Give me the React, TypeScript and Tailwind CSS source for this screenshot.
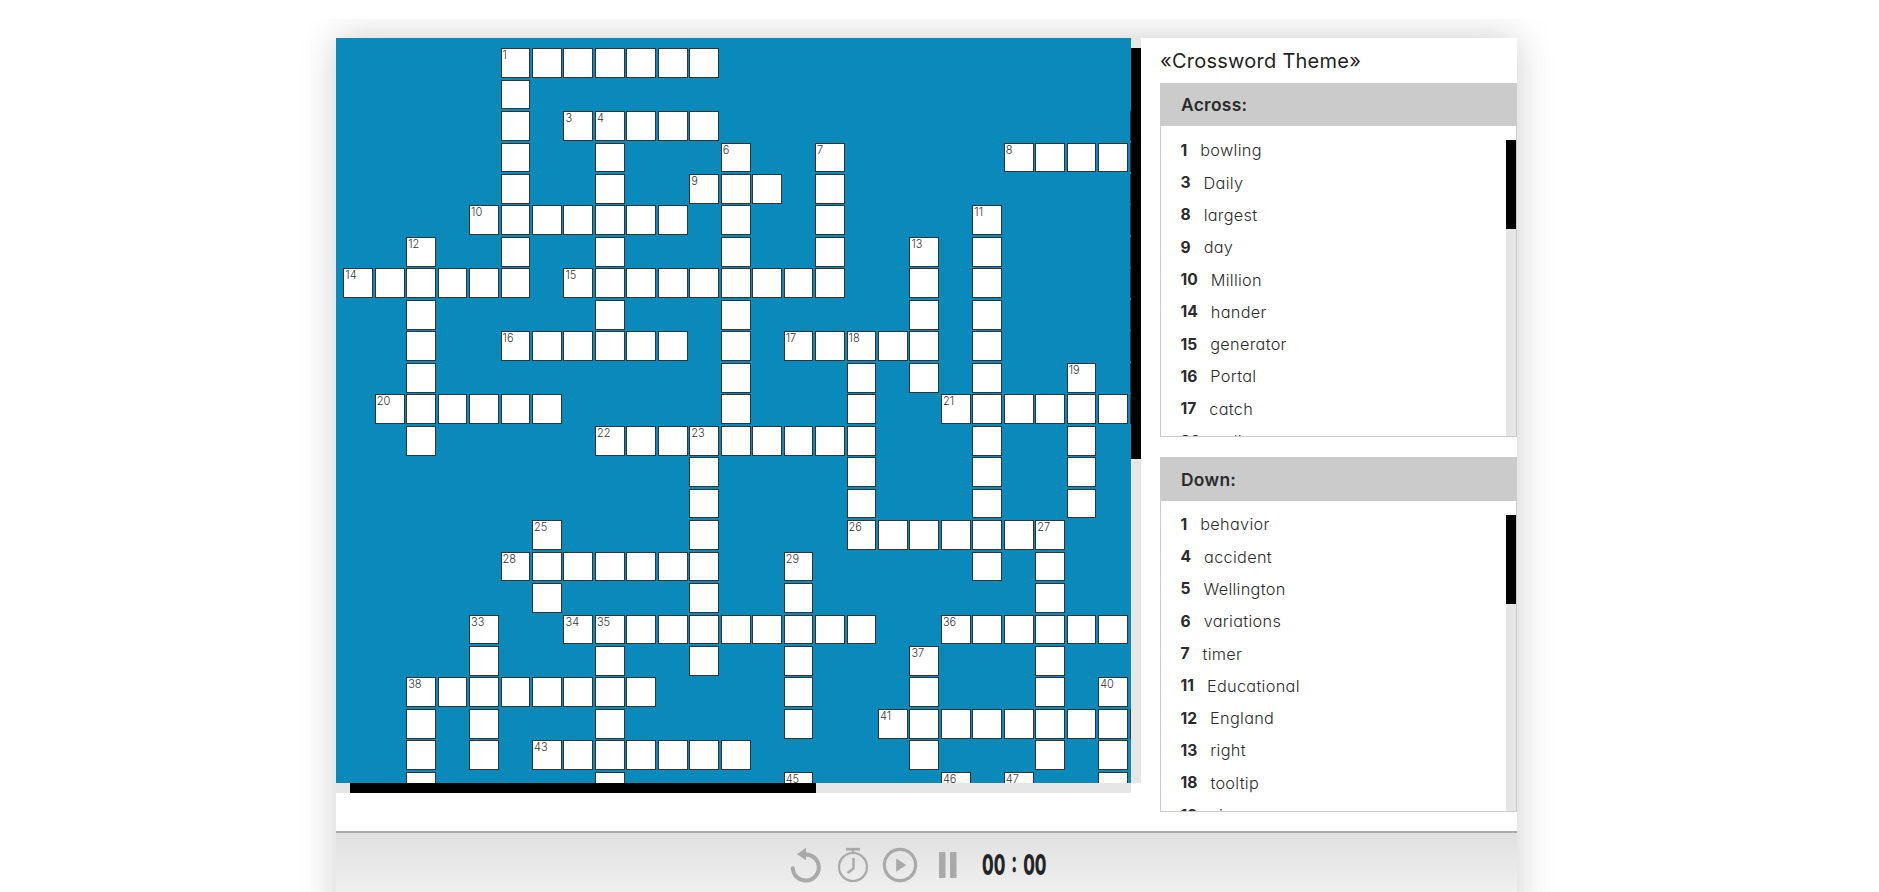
const BOARD: string[] = [
  '.....#######..............',
  '.....#....................',
  '.....#.#####.............#',
  '.....#..#...#..#.....#####',
  '.....#..#..###.#.........#',
  '....#######.#..#....#....#',
  '..#..#..#...#..#..#.#....#',
  '######.#########..#.#....#',
  '..#.....#...#.....#.#....#',
  '..#..######.#.#####.#....#',
  '..#.........#...#.#.#..#.#',
  '.######.....#...#..#######',
  '..#.....#########...#..#..',
  '...........#....#...#..#..',
  '...........#....#...#..#..',
  '......#....#....#######...',
  '.....#######..#.....#.#...',
  '......#....#..#.......#...',
  '....#..##########..######.',
  '....#...#..#..#...#...#...',
  '..########....#...#...#.#.',
  '..#.#...#.....#..#########',
  '..#.#.#######.....#...#.#.',
  '..#.....#.....#....#.#..#.',
];

const NUMBERS: Record<string, number> = {
  '0-5': 1, '2-7': 3, '2-8': 4, '3-12': 6, '3-15': 7, '3-21': 8, '4-11': 9, '5-4': 10, '5-20': 11,
  '6-2': 12, '6-18': 13, '7-0': 14, '7-7': 15, '9-5': 16, '9-14': 17, '9-16': 18, '10-23': 19,
  '11-1': 20, '11-19': 21, '12-8': 22, '12-11': 23, '15-6': 25, '15-16': 26, '15-22': 27,
  '16-5': 28, '16-14': 29, '18-4': 33, '18-7': 34, '18-8': 35, '18-19': 36, '19-18': 37,
  '20-2': 38, '20-24': 40, '21-17': 41, '22-6': 43, '23-14': 45, '23-19': 46, '23-21': 47,
};

type Clue = [number, string];

const ACROSS: Clue[] = [
  [1, 'bowling'], [3, 'Daily'], [8, 'largest'], [9, 'day'], [10, 'Million'],
  [14, 'hander'], [15, 'generator'], [16, 'Portal'], [17, 'catch'], [20, 'online'],
];

const DOWN: Clue[] = [
  [1, 'behavior'], [4, 'accident'], [5, 'Wellington'], [6, 'variations'], [7, 'timer'],
  [11, 'Educational'], [12, 'England'], [13, 'right'], [18, 'tooltip'], [19, 'size'],
];

function Board() {
  return (
    <div className="h-[745px] w-[795px] overflow-hidden bg-[#0a8abb] pt-[10.1px] pl-[7.3px]">
      <div className="grid w-max grid-cols-[repeat(26,31.46px)] auto-rows-[31.47px]">
        {BOARD.flatMap((line, r) =>
          line.split('').map((cell, c) => (
            <div key={`${r}-${c}`} className="pr-[1.7px] pb-[1.7px]">
              {cell === '#' && (
                <div className="h-full w-full border border-[#333] bg-white pl-px text-[11px] leading-[12px] font-light text-[#333]">
                  {NUMBERS[`${r}-${c}`]}
                </div>
              )}
            </div>
          )),
        )}
      </div>
    </div>
  );
}

type ClueBoxProps = { title: string; clues: Clue[]; className: string; headClass: string; listClass: string };

function ClueBox({ title, clues, className, headClass, listClass }: ClueBoxProps) {
  return (
    <section className={`flex flex-col overflow-hidden border border-[#ccc] ${className}`}>
      <h3 className={`flex shrink-0 items-center bg-[#cbcbcb] pt-px pl-5 text-[17.4px] font-semibold tracking-[.3px] text-[#2b2b2b] ${headClass}`}>
        {title}
      </h3>
      <div className="flex min-h-0 flex-1 justify-between">
        <ul className={`pl-[19.5px] ${listClass}`}>
          {clues.map(([n, text]) => (
            <li key={n} className="flex h-[32.3px] items-center gap-[13px] text-[15.6px] text-[#2b2b2b]">
              <b className="font-bold">{n}</b>
              <span className="text-[16.3px] font-light tracking-[.3px]">{text}</span>
            </li>
          ))}
        </ul>
        <div className="mt-[14px] w-[10px] bg-[#e6e6e6]">
          <div className="h-[89px] bg-black" />
        </div>
      </div>
    </section>
  );
}

function Toolbar() {
  return (
    <footer className="flex h-[90px] items-start border-t-2 border-[#a9aaa9] bg-linear-to-b from-[#e0e0e0] to-[#f7f7f7] pt-[14px] pl-[454px] text-[#a9a9a9]">
      <svg width="32" height="36" viewBox="0 0 32 36" fill="none">
        <path d="M2.8 21.3A13 13 0 1 0 15.5 7.5" stroke="currentColor" strokeWidth="4" strokeLinecap="round" />
        <path d="M7 7.2 16 .8v12.4z" fill="currentColor" />
      </svg>
      <svg className="ml-[15px]" width="32" height="36" viewBox="0 0 32 36" fill="none" stroke="currentColor">
        <circle cx="16" cy="20" r="14" strokeWidth="2.2" />
        <path d="M9 2.2h14" strokeWidth="2.8" />
        <path d="M16 2v4M16.5 11v10.5L10.5 26" strokeWidth="2.4" />
      </svg>
      <svg className="ml-[13px]" width="36" height="36" viewBox="0 0 36 36" fill="none">
        <circle cx="18" cy="18" r="15.6" stroke="currentColor" strokeWidth="3.2" />
        <path d="M14.2 11.5v13.2l10-6.6z" fill="currentColor" />
      </svg>
      <svg className="ml-[21px]" width="18" height="36" viewBox="0 0 18 36" fill="currentColor">
        <rect x="0" y="5" width="6.5" height="26" rx=".8" />
        <rect x="11" y="5" width="6.5" height="26" rx=".8" />
      </svg>
      <div className="mt-[3px] ml-[25px] flex h-[28px] w-[65px] origin-left scale-x-[.58] items-center text-[29px] leading-none font-extrabold [word-spacing:4px] whitespace-pre text-[#252525]">
        00 : 00
      </div>
    </footer>
  );
}

export default function App() {
  return (
    <div className="h-[892px] overflow-hidden bg-white pt-[19px] font-['Inter',sans-serif] [font-feature-settings:'cv11']">
      <div className="h-[873px] overflow-hidden pt-[19px] pl-[336px]">
        <main className="flex h-[884px] w-[1181px] flex-col bg-white shadow-[0_0_36px_rgba(0,0,0,0.2)]">
          <div className="flex h-[793px]">
            <div className="flex w-[805px] flex-col">
              <div className="flex">
                <Board />
                <div className="w-[10px] bg-[#e6e6e6] pt-[10px]">
                  <div className="h-[411px] bg-black" />
                </div>
              </div>
              <div className="h-[10px] w-[795px] bg-[#e6e6e6] pl-[14px]">
                <div className="h-full w-[466px] bg-black" />
              </div>
            </div>
            <div className="flex flex-1 flex-col pl-[19px]">
              <h2 className="flex h-[45px] items-center pt-px text-[20px] tracking-[.25px] text-[#1f1f1f]">«Crossword Theme»</h2>
              <ClueBox title="Across:" clues={ACROSS} className="h-[354px]" headClass="h-[42px]" listClass="pt-[8.4px]" />
              <ClueBox title="Down:" clues={DOWN} className="mt-5 h-[355px]" headClass="h-[43px]" listClass="pt-[7.4px]" />
            </div>
          </div>
          <Toolbar />
        </main>
      </div>
    </div>
  );
}
